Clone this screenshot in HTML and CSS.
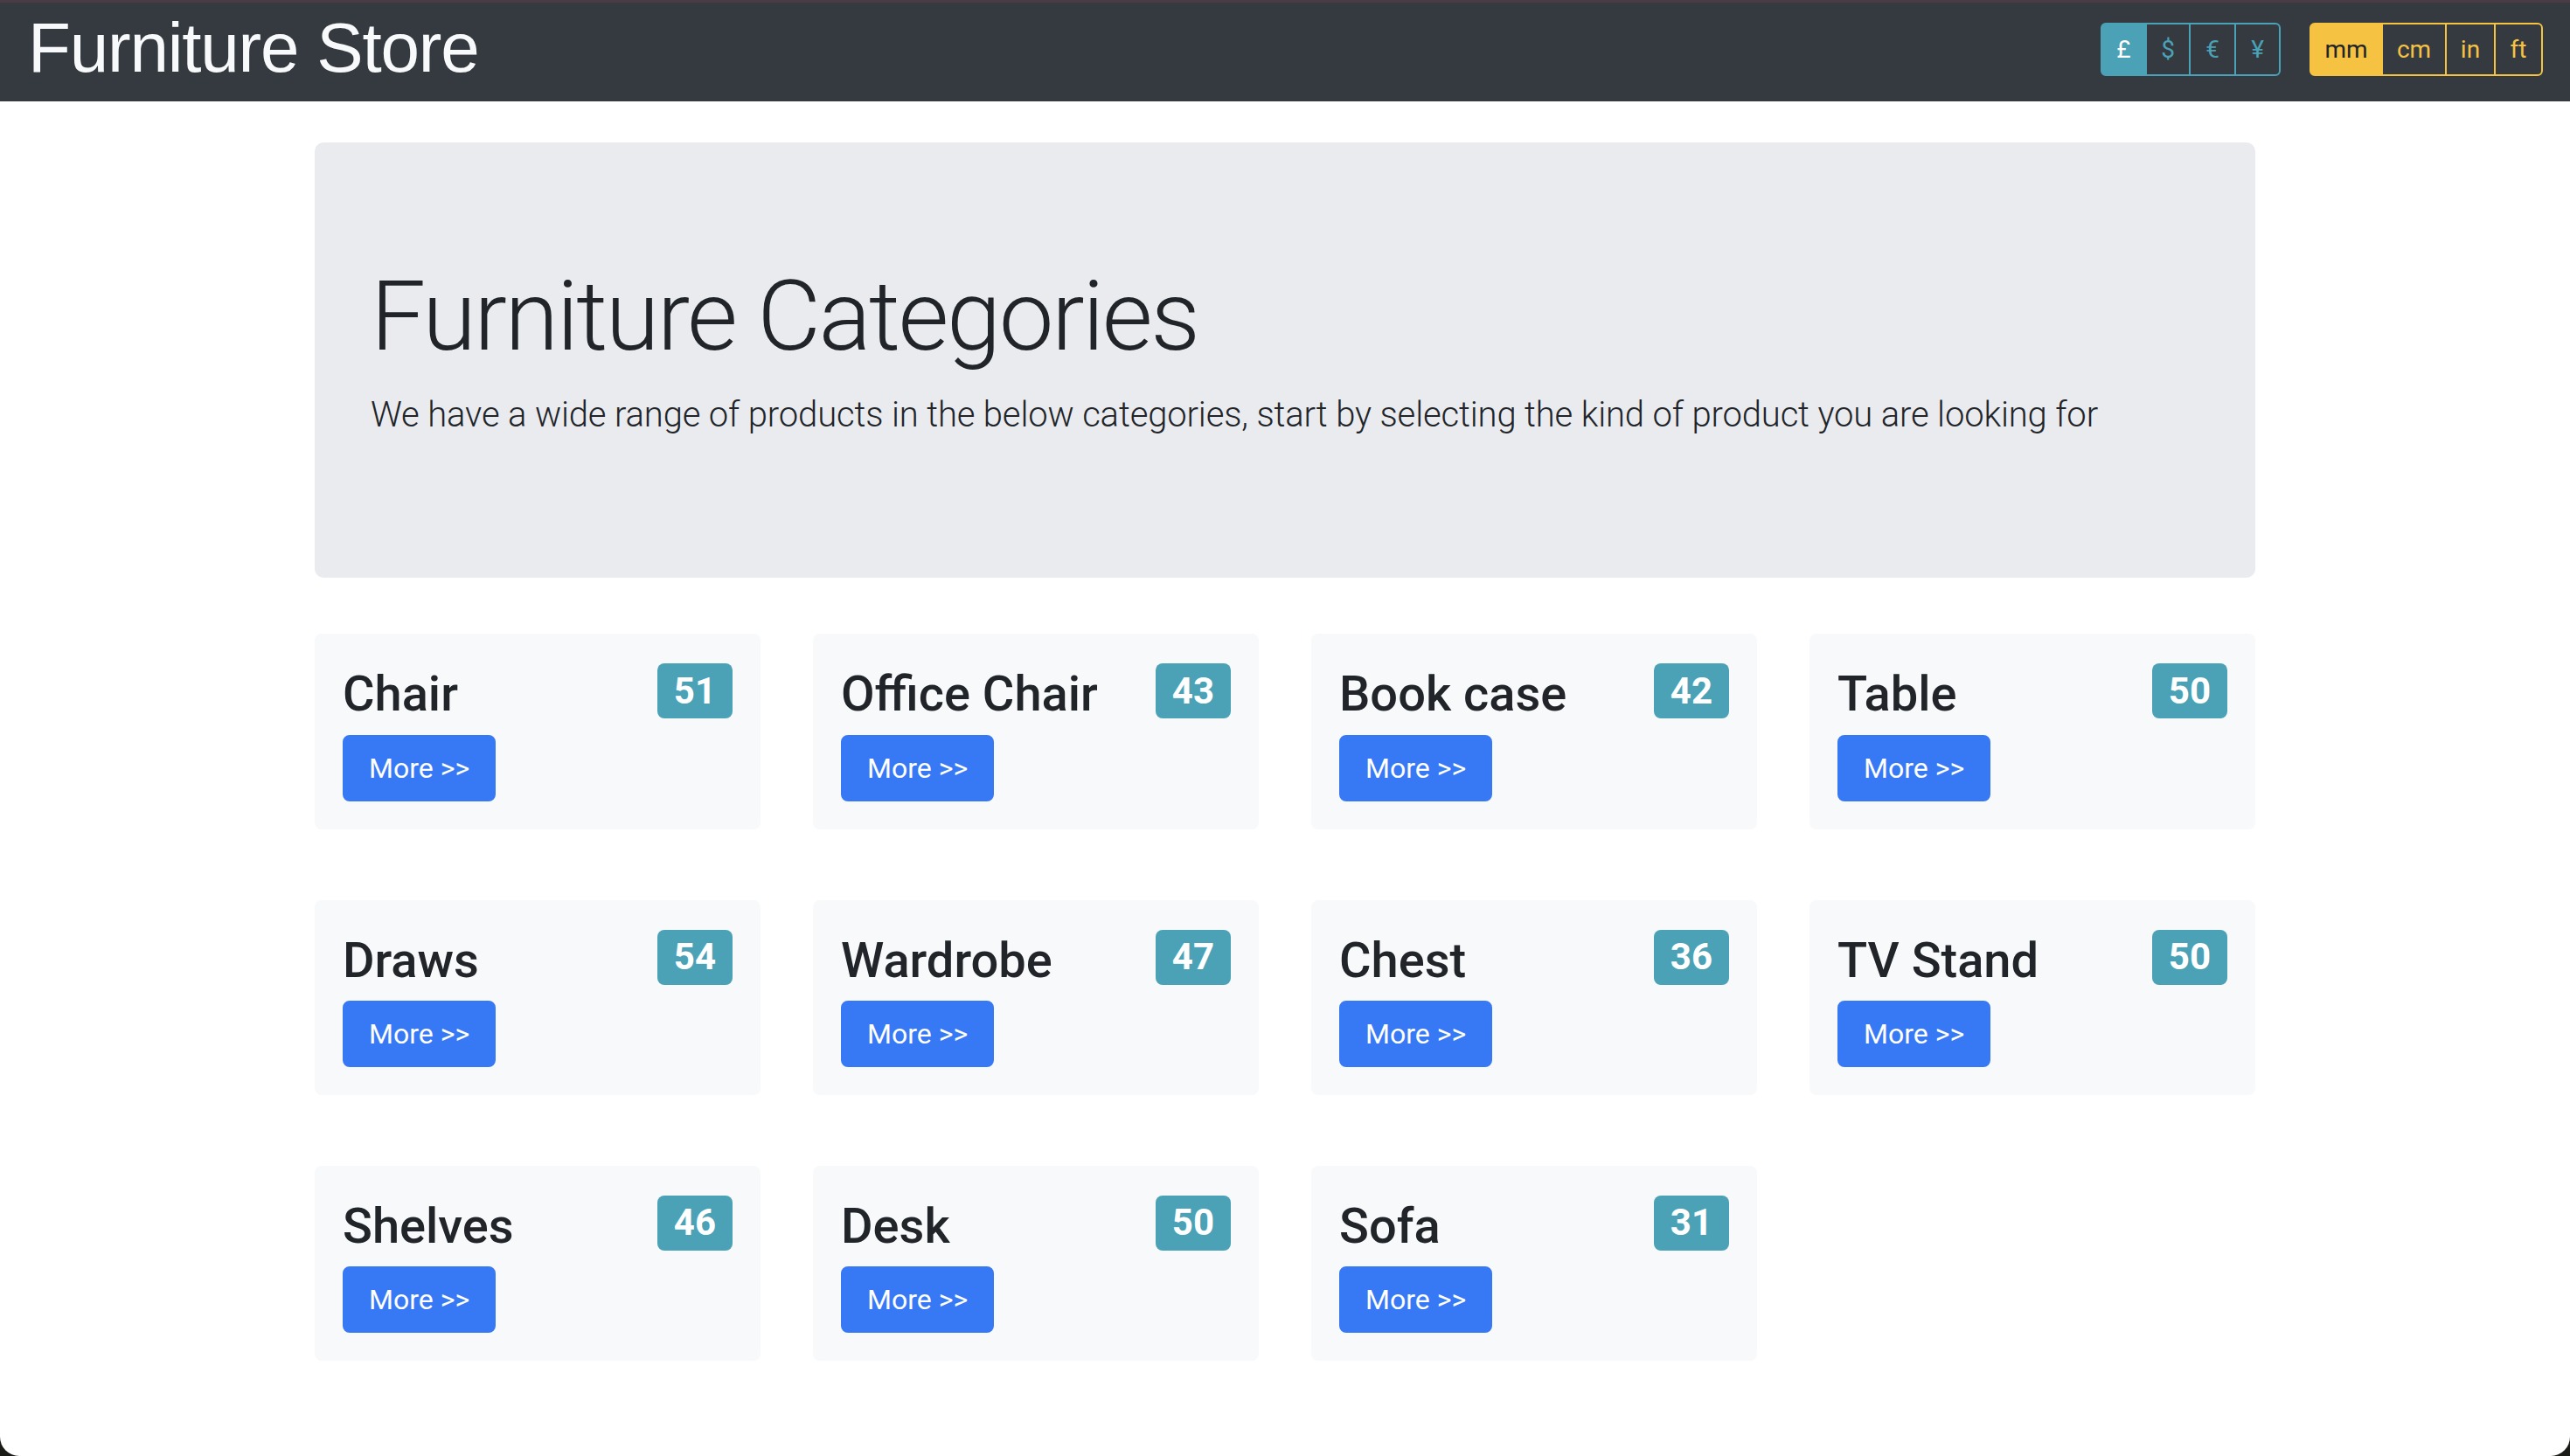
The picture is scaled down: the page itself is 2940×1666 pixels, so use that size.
FILE: index.html
```html
<!DOCTYPE html>
<html lang="en">
<head>
<meta charset="utf-8">
<title>Furniture Store</title>
<link rel="stylesheet" href="styles.css">
</head>
<body>
<nav class="navbar">
  <h1 class="brand">Furniture Store</h1>
  <div class="toggles">
    <div class="btn-group group-info">
      <button class="seg seg-gbp active">£</button>
      <button class="seg seg-usd">$</button>
      <button class="seg seg-eur">€</button>
      <button class="seg seg-jpy">¥</button>
    </div>
    <div class="btn-group group-warning">
      <button class="seg seg-mm active">mm</button>
      <button class="seg seg-cm">cm</button>
      <button class="seg seg-in">in</button>
      <button class="seg seg-ft">ft</button>
    </div>
  </div>
</nav>
<main class="container">
  <section class="jumbotron">
    <h1 class="display">Furniture Categories</h1>
    <p class="lead">We have a wide range of products in the below categories, start by selecting the kind of product you are looking for</p>
  </section>
  <div class="grid">
    <div class="card"><h3 class="card-title">Chair <span class="badge">51</span></h3><a class="btn" href="#">More &gt;&gt;</a></div>
    <div class="card"><h3 class="card-title">Office Chair <span class="badge">43</span></h3><a class="btn" href="#">More &gt;&gt;</a></div>
    <div class="card"><h3 class="card-title">Book case <span class="badge">42</span></h3><a class="btn" href="#">More &gt;&gt;</a></div>
    <div class="card"><h3 class="card-title">Table <span class="badge">50</span></h3><a class="btn" href="#">More &gt;&gt;</a></div>
    <div class="card"><h3 class="card-title">Draws <span class="badge">54</span></h3><a class="btn" href="#">More &gt;&gt;</a></div>
    <div class="card"><h3 class="card-title">Wardrobe <span class="badge">47</span></h3><a class="btn" href="#">More &gt;&gt;</a></div>
    <div class="card"><h3 class="card-title">Chest <span class="badge">36</span></h3><a class="btn" href="#">More &gt;&gt;</a></div>
    <div class="card"><h3 class="card-title">TV Stand <span class="badge">50</span></h3><a class="btn" href="#">More &gt;&gt;</a></div>
    <div class="card"><h3 class="card-title">Shelves <span class="badge">46</span></h3><a class="btn" href="#">More &gt;&gt;</a></div>
    <div class="card"><h3 class="card-title">Desk <span class="badge">50</span></h3><a class="btn" href="#">More &gt;&gt;</a></div>
    <div class="card"><h3 class="card-title">Sofa <span class="badge">31</span></h3><a class="btn" href="#">More &gt;&gt;</a></div>
  </div>
</main>
</body>
</html>
```
FILE: styles.css
```css
html {
  background: #1b1b17;
  height: 100%;
}
body {
  margin: 0;
  min-height: 100%;
  background: #ffffff;
  border-radius: 0 0 22px 22px;
  font-family: Roboto, "Noto Sans", sans-serif;
  color: #212529;
  overflow: hidden;
}
.navbar {
  box-sizing: border-box;
  height: 116px;
  border-top: 3px solid #4a3b46;
  background: #343a40;
  display: flex;
  align-items: flex-start;
  justify-content: space-between;
  padding: 0 31px 0 32px;
}
.brand {
  margin: 12px 0 0 0;
  font-family: "Liberation Sans", Arial, sans-serif;
  font-weight: 400;
  font-size: 80px;
  line-height: 80px;
  letter-spacing: -1.2px;
  color: #f8f9fa;
}
.toggles {
  display: flex;
  gap: 33px;
  margin-top: 23px;
}
.btn-group {
  display: flex;
}
.seg {
  box-sizing: border-box;
  font-family: Roboto, "Noto Sans", sans-serif;
  font-size: 28px;
  line-height: 42px;
  height: 61px;
  padding: 0;
  text-align: center;
  background: transparent;
  border: 2px solid;
  border-radius: 0;
  margin-left: -2px;
  cursor: pointer;
}
.seg:first-child {
  margin-left: 0;
  border-radius: 6px 0 0 6px;
}
.seg:last-child {
  border-radius: 0 6px 6px 0;
}
.group-info .seg {
  border-color: #4ba2b6;
  color: #4ba2b6;
}
.group-info .seg.active {
  background: #4ba2b6;
  color: #ffffff;
}
.group-warning .seg {
  border-color: #f5c242;
  color: #f5c242;
}
.group-warning .seg.active {
  background: #f5c242;
  color: #212529;
}
.seg-gbp { width: 53px; }
.seg-usd { width: 52px; }
.seg-eur { width: 54px; }
.seg-jpy { width: 53px; }
.seg-mm { width: 84px; }
.seg-cm { width: 75px; }
.seg-in { width: 58px; }
.seg-ft { width: 56px; }

.container {
  width: 2220px;
  margin: 0 auto;
}
.jumbotron {
  margin-top: 47px;
  background: #eaebef;
  border-radius: 10px;
  padding: 128px 64px;
}
.display {
  margin: 0 0 16px 0;
  padding-top: 4px;
  font-size: 112px;
  font-weight: 300;
  line-height: 134.4px;
  letter-spacing: -2.5px;
}
.lead {
  margin: 0 0 28px 0;
  font-size: 40px;
  font-weight: 300;
  line-height: 60px;
  letter-spacing: -0.15px;
}
.grid {
  margin-top: 64px;
  display: grid;
  grid-template-columns: repeat(4, 510px);
  column-gap: 60px;
  row-gap: 81px;
}
.card {
  background: #f8f9fa;
  border-radius: 8px;
  padding: 32px;
}
.card-title {
  margin: 0 0 12px 0;
  padding-top: 4px;
  display: flex;
  justify-content: space-between;
  align-items: flex-start;
  font-size: 56px;
  font-weight: 500;
  line-height: 67.2px;
}
.badge {
  margin-top: -2px;
  font-size: 42px;
  font-weight: 700;
  line-height: 1;
  padding: 10.5px 19px;
  border-radius: 8px;
  background: #4ba2b6;
  color: #ffffff;
}
.btn {
  display: inline-block;
  font-size: 32px;
  line-height: 48px;
  padding: 12px 28px;
  border: 2px solid #3779f5;
  border-radius: 8px;
  background: #3779f5;
  color: #ffffff;
  text-decoration: none;
}
```
